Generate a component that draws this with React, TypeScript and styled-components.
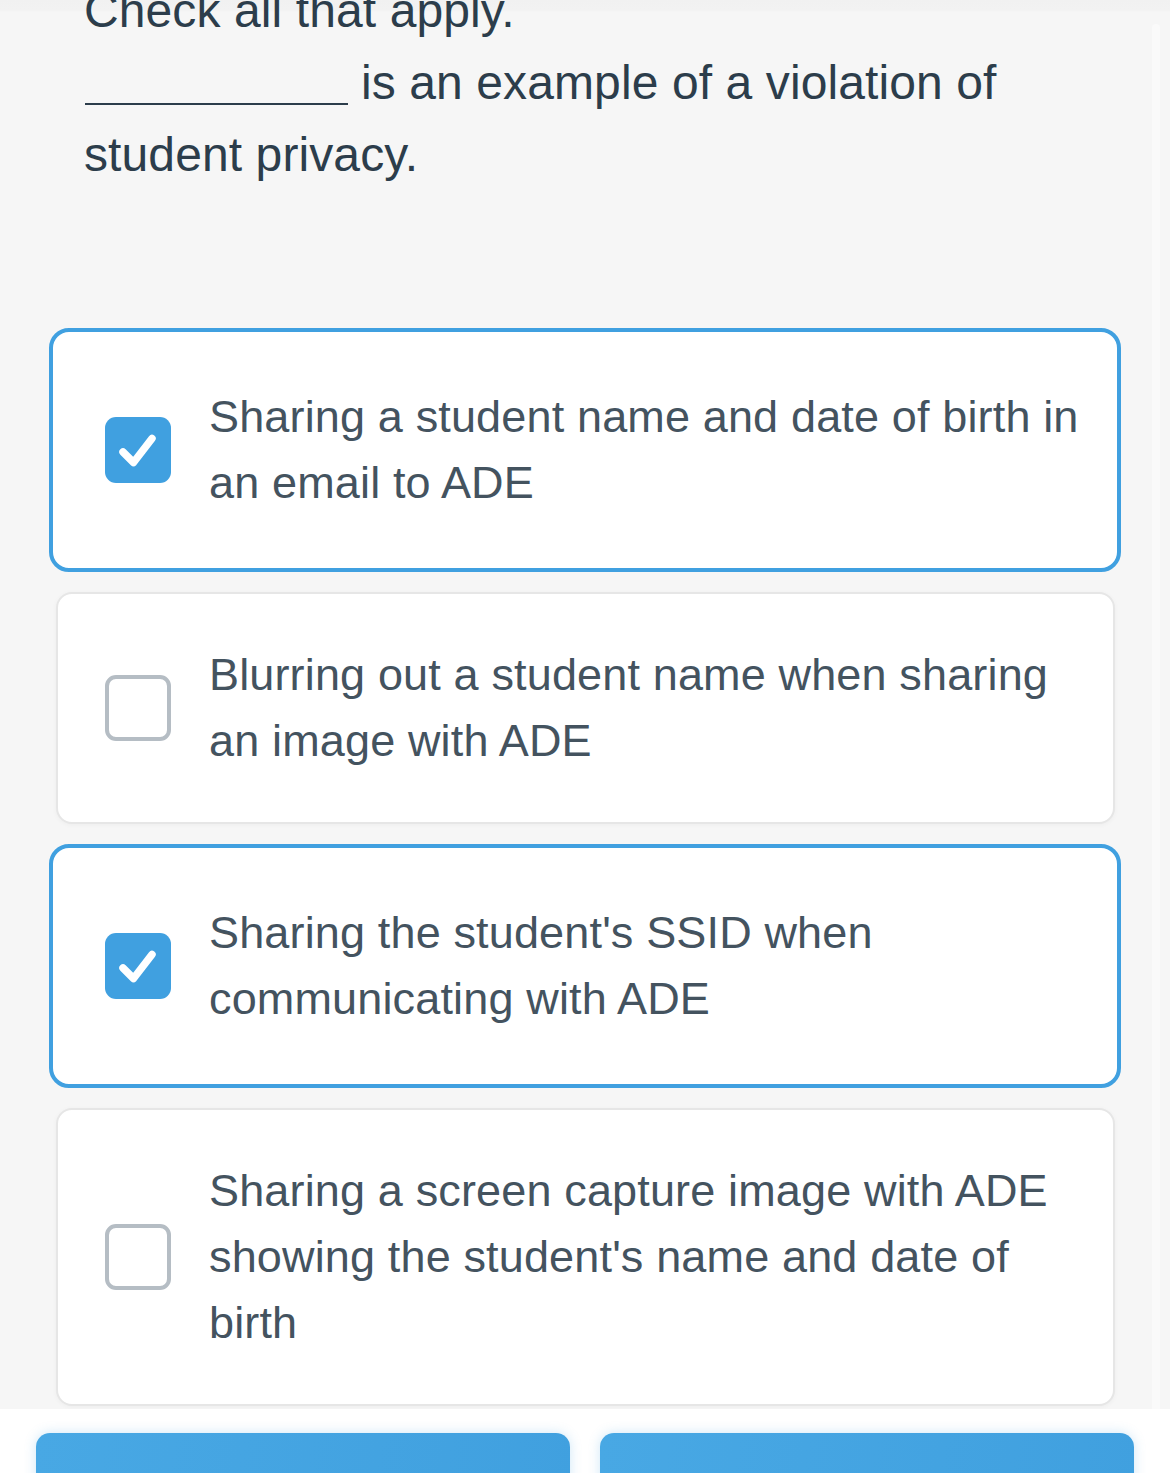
import * as React from "react";
import styled, { createGlobalStyle } from "styled-components";

interface IOption {
  text: string;
  checked: boolean;
}

const Options: IOption[] = [
  { text: "Sharing a student name and date of birth in an email to ADE", checked: true },
  { text: "Blurring out a student name when sharing an image with ADE", checked: false },
  { text: "Sharing the student's SSID when communicating with ADE", checked: true },
  {
    text: "Sharing a screen capture image with ADE showing the student's name and date of birth",
    checked: false,
  },
];

const GlobalStyle = createGlobalStyle`
  html, body {
    margin: 0;
    padding: 0;
    background: #f6f6f6;
  }
  body {
    font-family: "Liberation Sans", Arial, Helvetica, sans-serif;
    -webkit-font-smoothing: antialiased;
  }
`;

const Page = styled.div`
  height: 1473px;
  display: flex;
  flex-direction: column;
  overflow: hidden;
`;

const Main = styled.main`
  position: relative;
  height: 1409px;
  flex-shrink: 0;
  overflow: hidden;
  background: linear-gradient(#f1f1f1 0, #f2f2f2 10px, #f6f6f6 12px);
`;

// faint scroll indicator on the right edge
const ScrollTrack = styled.div`
  position: absolute;
  top: 24px;
  bottom: 0;
  right: 10px;
  width: 8px;
  border-radius: 4px 4px 0 0;
  background: #fafafa;
`;

const Question = styled.div`
  margin-top: -25px;
  padding: 0 150px 0 84px;
  font-size: 48px;
  line-height: 72px;
  letter-spacing: 0.1px;
  color: #2c3d4b;
`;

const Blank = styled.span`
  display: inline-block;
  width: 263px;
  border-bottom: 2px solid #2c3d4b;
  vertical-align: -6px;
  margin-left: 1px;
  margin-right: 13px;
`;

const OptionList = styled.div`
  display: flex;
  flex-direction: column;
  gap: 26px;
  margin-top: 143px;
  padding: 0 55px 0 56px;
`;

const Card = styled.div<{ $selected: boolean }>`
  display: flex;
  align-items: center;
  gap: 38px;
  background: #fff;
  border-radius: ${(p) => (p.$selected ? "20px" : "16px")};
  border: ${(p) => (p.$selected ? "4px solid #40a0e0" : "2px solid #e6e6e6")};
  box-shadow: ${(p) => (p.$selected ? "none" : "0 1px 5px rgba(0, 0, 0, 0.04)")};
  margin: ${(p) => (p.$selected ? "-6px -6px -6px -7px" : "0")};
  padding: ${(p) => (p.$selected ? "52px 25px 52px 52px" : "48px 21px 48px 47px")};
`;

const Box = styled.div<{ $checked: boolean }>`
  flex-shrink: 0;
  width: 66px;
  height: 66px;
  box-sizing: border-box;
  border-radius: 11px;
  background: ${(p) => (p.$checked ? "#40a0e0" : "#fff")};
  border: ${(p) => (p.$checked ? "none" : "4px solid #b5bdc4")};
  display: flex;
`;

const OptionText = styled.div`
  font-size: 45px;
  line-height: 66px;
  letter-spacing: 0.15px;
  color: #44535f;
`;

const Footer = styled.footer`
  flex-shrink: 0;
  display: flex;
  gap: 30px;
  padding: 24px 36px 0;
  background: #fff;
  box-shadow: 0 -2px 5px rgba(0, 0, 0, 0.08);
`;

const FooterButton = styled.button`
  flex: 1;
  height: 110px;
  border: none;
  border-radius: 14px;
  background: linear-gradient(100deg, #48a8e4, #40a0df);
  box-shadow: 0 0 12px rgba(64, 160, 224, 0.25);
`;

const Check = () => (
  <svg width="66" height="66" viewBox="0 0 66 66">
    <polyline
      points="18,35 28.5,45.5 47,21.5"
      fill="none"
      stroke="#fff"
      strokeWidth="7.5"
      strokeLinecap="round"
      strokeLinejoin="round"
    />
  </svg>
);

export default function App() {
  return (
    <Page>
      <GlobalStyle />
      <Main>
        <ScrollTrack />
        <Question>
          <div>Check all that apply.</div>
          <div>
            <Blank />
            is an example of a violation of student privacy.
          </div>
        </Question>
        <OptionList>
          {Options.map((opt) => (
            <Card key={opt.text} $selected={opt.checked}>
              <Box $checked={opt.checked}>{opt.checked && <Check />}</Box>
              <OptionText>{opt.text}</OptionText>
            </Card>
          ))}
        </OptionList>
      </Main>
      <Footer>
        <FooterButton aria-label="Back" />
        <FooterButton aria-label="Next" />
      </Footer>
    </Page>
  );
}
